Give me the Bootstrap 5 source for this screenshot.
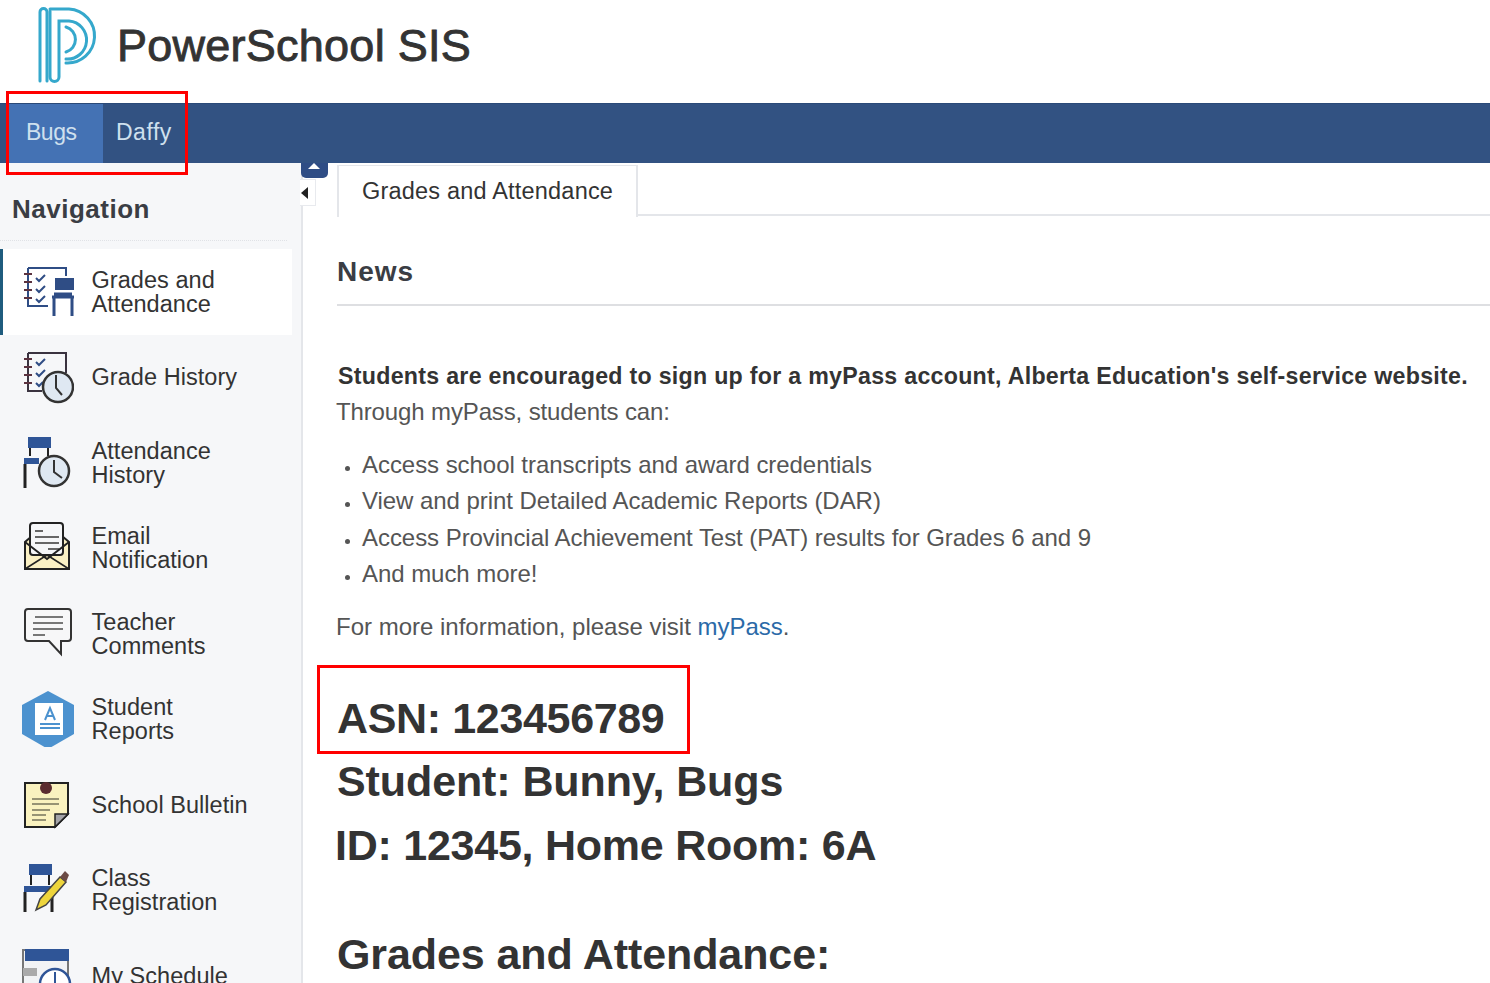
<!DOCTYPE html>
<html lang="en"><head><meta charset="utf-8"><title>PowerSchool SIS</title>
<link href="https://cdn.jsdelivr.net/npm/bootstrap@5.3.0/dist/css/bootstrap.min.css" rel="stylesheet">
<style>
html,body{height:983px;overflow:hidden;}
body{background:#fff;font-family:"Liberation Sans",Arial,sans-serif;color:#333;}
.ps-head{height:103px;padding:6px 0 0 36px;gap:17px;}
.ps-title{font-size:45px;font-weight:400;color:#333;-webkit-text-stroke:.9px #333;letter-spacing:.25px;line-height:80px;margin:0;}
.ps-bar{height:60px;background:#325282;border-top:1px solid #2b4a78;}
.ps-kid{color:#cfe0ee;font-size:23px;letter-spacing:-.5px;height:59px;line-height:56px;text-decoration:none;display:block;}
.ps-kid-on{background:#4472b4;width:95px;margin-left:8px;padding-left:18px;}
.ps-kid-off{padding-left:13px;letter-spacing:.5px;}
.ps-redbox{position:absolute;border:3px solid #f00;pointer-events:none;}
.ps-rb1{left:6px;top:91px;width:182px;height:84px;}
.ps-rb2{left:317px;top:665px;width:373px;height:89px;}
.ps-main{height:820px;}
.ps-side{width:303px;background:#f6f7f9;border-right:2px solid #e4e6ea;flex:none;}
.ps-navh{font-size:26px;font-weight:700;color:#3a3d44;margin:0 14px 0 0;padding:29px 0 13px 12px;line-height:34px;letter-spacing:.5px;border-bottom:1px dotted #e0e2e6;height:78px;}
.ps-nav{list-style:none;margin:8px 0 0;padding:0;}
.ps-item{display:flex;align-items:center;height:85.5px;padding-left:22px;gap:17.5px;font-size:23.5px;line-height:24px;color:#333;letter-spacing:.05px;}
.ps-item svg{flex:none;width:52px;height:56px;}
.ps-active{background:#fff;margin-right:9px;border-left:3px solid #1f5c7e;padding-left:19px;}
.ps-content{flex:1;min-width:0;position:relative;padding-left:34px;}
.ps-tab{display:inline-block;height:52px;line-height:50px;padding:0 23px;font-size:23.5px;letter-spacing:.2px;color:#333;border:2px solid #e4e6ea;border-bottom:0;border-top:1px solid #e4e6ea;background:#fff;margin-top:2px;position:relative;z-index:1;}
.ps-tabline{border-bottom:2px solid #e4e6ea;height:53px;}
.ps-grip{position:absolute;left:-2px;top:0;width:27px;height:15px;background:#2f4d85;border-radius:0 0 5px 5px;}
.ps-grip::after{content:"";position:absolute;left:7px;top:0;border:6px solid transparent;border-top:0;border-bottom:6px solid #fff;}
.ps-arrow{position:absolute;left:-3px;top:16px;width:16px;height:27px;background:#fff;border:1px solid #e8eaee;border-left:0;}
.ps-arrow::after{content:"";position:absolute;left:1px;top:7px;border:6px solid transparent;border-left:0;border-right:7px solid #222;}
.ps-h-news{font-size:28px;font-weight:700;color:#3a3d44;margin:0;height:90px;padding-top:39px;line-height:34px;border-bottom:2px solid #dedfe2;letter-spacing:1px;}
.ps-lead{font-size:23.2px;font-weight:700;color:#333;margin:55px 0 0 1px;line-height:30px;white-space:nowrap;letter-spacing:.28px;}
.ps-p{font-size:24px;letter-spacing:-.13px;color:#555;margin:6px 0 0 -1px;line-height:30px;}
.ps-list{margin:20px 0 0;padding-left:25px;font-size:24px;letter-spacing:-.05px;color:#555;line-height:36.3px;}
.ps-list li::marker{font-size:18px;}
.ps-more{font-size:24px;letter-spacing:0;color:#555;margin:20px 0 0 -1px;line-height:30px;}
.ps-more a{color:#2b6aa8;text-decoration:none;}
.ps-bigs{font-size:43px;font-weight:700;color:#333;margin:0;line-height:64px;white-space:nowrap;letter-spacing:-.1px;}
.ps-asn{margin-top:44px;margin-bottom:-1px;letter-spacing:-.35px;}
.ps-idline{margin-left:-2px;letter-spacing:-.25px;}
.ps-grades{margin-top:45px;}
</style></head><body>
<header class="ps-head d-flex align-items-start">
<svg width="64" height="78" viewBox="0 0 64 78" fill="none" stroke="#35a8cc" stroke-width="3" stroke-linecap="round" aria-label="PowerSchool logo"><path d="M4 75V6a3.500 3.500 0 0 1 7 0v69"/><path d="M14 5V71a4.500 4.500 0 0 0 9 0V15h10a19 19 0 0 1-3 38"/><path d="M14 3h19a27 27 0 0 1-3 54"/><path d="M30 21a13 13 0 0 1 0 25"/></svg>
<h1 class="ps-title">PowerSchool SIS</h1>
</header>
<nav class="ps-bar d-flex"><a class="ps-kid ps-kid-on" href="#">Bugs</a><a class="ps-kid ps-kid-off" href="#">Daffy</a></nav>
<div class="ps-redbox ps-rb1"></div>
<div class="d-flex ps-main">
<aside class="ps-side">
<h2 class="ps-navh">Navigation</h2>
<ul class="ps-nav">
<li class="ps-item ps-active"><svg viewBox="0 0 52 56" fill="none"><path d="M6 4h38v8M6 4v38h20" stroke="#2f4d85" stroke-width="2"/><path d="M2 10h8M2 18h8M2 26h8M2 34h8" stroke="#5b3340" stroke-width="2"/><path d="M14 14l3 3 6-6M14 25l3 3 6-6M14 35l3 3 6-6" stroke="#2f4d85" stroke-width="2"/><rect x="33" y="14" width="19" height="12" fill="#2f4d85"/><path d="M30 33h22M32 33v19M50 33v19M32 30h18" stroke="#2f4d85" stroke-width="3"/></svg><span>Grades and<br>Attendance</span></li>
<li class="ps-item"><svg viewBox="0 0 52 56" fill="none"><path d="M6 4h38v20M6 4v38h14" stroke="#3a3340" stroke-width="2"/><path d="M2 10h8M2 18h8M2 26h8M2 34h8" stroke="#5b3340" stroke-width="2"/><path d="M14 13l3 3 6-6M14 24l3 3 6-6M14 34l3 3 4-4" stroke="#2f4d85" stroke-width="2"/><circle cx="36" cy="38" r="15" fill="#dfe8f2" stroke="#333" stroke-width="2.500"/><path d="M34 26v13l6 7" stroke="#333" stroke-width="2"/></svg><span>Grade History</span></li>
<li class="ps-item"><svg viewBox="0 0 52 56" fill="none"><rect x="6" y="2" width="23" height="11" fill="#2f5597"/><path d="M8 13v8M26 13v8" stroke="#222" stroke-width="2"/><rect x="2" y="23" width="15" height="6" fill="#2f5597"/><path d="M3 29v24" stroke="#222" stroke-width="3"/><circle cx="32" cy="36" r="15" fill="#dfe8f2" stroke="#333" stroke-width="2.500"/><path d="M32 25v12l8 6" stroke="#333" stroke-width="2"/></svg><span>Attendance<br>History</span></li>
<li class="ps-item"><svg viewBox="0 0 52 56" fill="none"><path d="M3 22v27h44V22l-7-6H10z" fill="#faf0c4" stroke="#222" stroke-width="2"/><rect x="8" y="3" width="33" height="32" rx="3" fill="#f5f6f8" stroke="#222" stroke-width="2"/><path d="M13 11h8M13 17h24M13 23h24M26 29h11" stroke="#666" stroke-width="2"/><path d="M3 22l22 17 22-17" fill="none" stroke="#222" stroke-width="2"/><path d="M3 49l22-14 22 14" stroke="#222" stroke-width="1.500"/></svg><span>Email<br>Notification</span></li>
<li class="ps-item"><svg viewBox="0 0 52 56" fill="none"><path d="M6 3h40a3 3 0 0 1 3 3v26a3 3 0 0 1-3 3h-7v13L27 35H6a3 3 0 0 1-3-3V6a3 3 0 0 1 3-3z" fill="#f7f7f8" stroke="#333" stroke-width="2"/><path d="M13 11h28M11 17h30M11 23h30M11 29h12" stroke="#777" stroke-width="2"/></svg><span>Teacher<br>Comments</span></li>
<li class="ps-item"><svg viewBox="0 0 52 56" fill="none"><path d="M26 0l26 14v29L26 58 0 43V14z" fill="#4c92cf"/><path d="M13 12h28v32H13z" fill="#fff"/><path d="M23 29l5-12 5 12M25 25h6M18 33h20M18 37h20" stroke="#4c92cf" stroke-width="2"/></svg><span>Student<br>Reports</span></li>
<li class="ps-item"><svg viewBox="0 0 52 56" fill="none"><path d="M3 6h43v31L33 50H3z" fill="#faf2bf" stroke="#222" stroke-width="2"/><path d="M46 37H33v13z" fill="#a4a4a8" stroke="#222" stroke-width="1.500"/><circle cx="24" cy="11" r="6" fill="#5b2c30"/><path d="M10 22h27M10 27h27M10 33h18M10 38h14M10 43h14" stroke="#77745c" stroke-width="1.500"/></svg><span>School Bulletin</span></li>
<li class="ps-item"><svg viewBox="0 0 52 56" fill="none"><rect x="7" y="2" width="23" height="11" fill="#2f5597"/><path d="M9 13v10M27 13v10" stroke="#222" stroke-width="2"/><rect x="2" y="24" width="30" height="6" fill="#2f5597"/><path d="M3 30v20M30 30v20" stroke="#222" stroke-width="3"/><path d="M14 48l4-11 20-22 6 5-20 23z" fill="#eed53c" stroke="#444" stroke-width="1.500"/><path d="M38 15l5-6 4 4-3 7z" fill="#6b4a45"/></svg><span>Class<br>Registration</span></li>
<li class="ps-item"><svg viewBox="0 0 52 56" fill="none"><path d="M1 2h45v54H1z" fill="#f2f3f5" stroke="#777" stroke-width="2"/><rect x="3" y="1" width="44" height="12" fill="#2f5597"/><rect x="1" y="20" width="14" height="8" fill="#aaa"/><circle cx="33" cy="36" r="15" fill="#fff" stroke="#2f5597" stroke-width="2.500"/><path d="M33 24v12" stroke="#2f5597" stroke-width="2"/></svg><span>My Schedule</span></li>
</ul>
</aside>
<main class="ps-content">
<div class="ps-grip"></div><div class="ps-arrow"></div>
<div class="ps-tabline"><span class="ps-tab">Grades and Attendance</span></div>
<h2 class="ps-h-news">News</h2>
<p class="ps-lead">Students are encouraged to sign up for a myPass account, Alberta Education's self-service website.</p>
<p class="ps-p">Through myPass, students can:</p>
<ul class="ps-list"><li>Access school transcripts and award credentials</li><li>View and print Detailed Academic Reports (DAR)</li><li>Access Provincial Achievement Test (PAT) results for Grades 6 and 9</li><li>And much more!</li></ul>
<p class="ps-more">For more information, please visit <a href="#">myPass</a>.</p>
<p class="ps-bigs ps-asn">ASN: 123456789</p>
<p class="ps-bigs">Student: Bunny, Bugs</p>
<p class="ps-bigs ps-idline">ID: 12345, Home Room: 6A</p>
<p class="ps-bigs ps-grades">Grades and Attendance:</p>
</main>
</div>
<div class="ps-redbox ps-rb2"></div>
<script src="https://cdn.jsdelivr.net/npm/bootstrap@5.3.0/dist/js/bootstrap.bundle.min.js"></script>
</body></html>
